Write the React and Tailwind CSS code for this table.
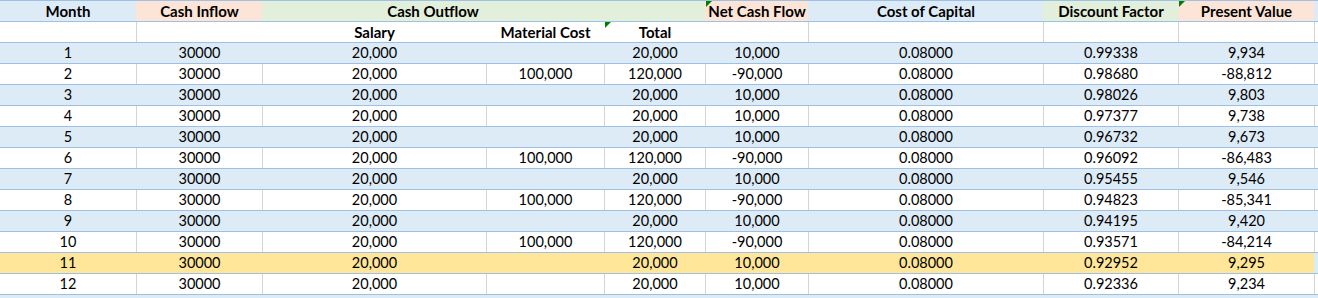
import React from 'react';

const cols = 'grid grid-cols-[136px_126px_224px_118px_101px_103px_235px_135px_136px_1fr]';

const rows = [
  ['1', '', '20,000', '10,000', '0.99338', '9,934'],
  ['2', '100,000', '120,000', '-90,000', '0.98680', '-88,812'],
  ['3', '', '20,000', '10,000', '0.98026', '9,803'],
  ['4', '', '20,000', '10,000', '0.97377', '9,738'],
  ['5', '', '20,000', '10,000', '0.96732', '9,673'],
  ['6', '100,000', '120,000', '-90,000', '0.96092', '-86,483'],
  ['7', '', '20,000', '10,000', '0.95455', '9,546'],
  ['8', '100,000', '120,000', '-90,000', '0.94823', '-85,341'],
  ['9', '', '20,000', '10,000', '0.94195', '9,420'],
  ['10', '100,000', '120,000', '-90,000', '0.93571', '-84,214'],
  ['11', '', '20,000', '10,000', '0.92952', '9,295'],
  ['12', '', '20,000', '10,000', '0.92336', '9,234'],
];

const Flag = () => (
  <span className="absolute left-0 top-0 h-0 w-0 border-t-[6px] border-r-[6px] border-t-[#008000] border-r-transparent" />
);

const Cell = ({ children, line, flag, className = '' }) => (
  <div
    className={`relative flex h-[20px] items-center justify-center border-l ${
      line ? 'border-[#d4d4d4]' : 'border-transparent'
    } ${className}`}
  >
    {flag && <Flag />}
    <span className="pt-[1px]">{children}</span>
  </div>
);

const App = () => {
  return (
    <div
      className="w-[1318px] h-[298px] overflow-hidden bg-white text-[14.5px] leading-none text-black"
      style={{ fontFamily: 'Lato, "Open Sans", sans-serif' }}
    >
      <div className={`${cols} border-y border-[#9bc2e6] bg-[#ddebf7] text-[15px] font-bold`}>
        <Cell className="border-l-0">Month</Cell>
        <Cell className="bg-[#fce4d6]">Cash Inflow</Cell>
        <div className="col-span-2 flex h-[20px] items-center justify-center bg-[#e2efda] pt-[1px]">Cash Outflow</div>
        <Cell className="bg-[#e2efda]" />
        <Cell className="bg-[#fce4d6]" flag>Net Cash Flow</Cell>
        <Cell>Cost of Capital</Cell>
        <Cell className="bg-[#e2efda]">Discount Factor</Cell>
        <Cell className="bg-[#fce4d6]" flag>Present Value</Cell>
        <Cell />
      </div>

      <div className={`${cols} border-b border-[#9bc2e6] bg-white text-[15px] font-bold`}>
        <Cell className="border-l-0" />
        <Cell line />
        <Cell>Salary</Cell>
        <Cell>Material Cost</Cell>
        <Cell flag>Total</Cell>
        <Cell />
        <Cell line />
        <Cell line />
        <Cell line />
        <Cell line />
      </div>

      {rows.map(([month, material, total, net, df, pv], i) => {
        const striped = i % 2 === 0;
        const highlight = month === '11';
        const bg = highlight ? 'bg-[#ffe699]' : striped ? 'bg-[#ddebf7]' : 'bg-white';
        const line = !striped && !highlight;
        return (
          <div key={month} className={`${cols} border-b border-[#9bc2e6] ${striped ? 'bg-[#ddebf7]' : 'bg-white'}`}>
            <Cell className={`border-l-0 ${bg}`}>{month}</Cell>
            <Cell line={line} className={bg}>30000</Cell>
            <Cell line={line} className={bg}>20,000</Cell>
            <Cell line={line} className={bg}>{material}</Cell>
            <Cell line={line} className={bg}>{total}</Cell>
            <Cell line={line} className={bg}>{net}</Cell>
            <Cell line={line} className={bg}>0.08000</Cell>
            <Cell line={line} className={bg}>{df}</Cell>
            <Cell line={line} className={bg}>{pv}</Cell>
            <Cell line={line} />
          </div>
        );
      })}

      <div className="h-[20px] bg-[#ddebf7]" />
    </div>
  );
};

export default App;
